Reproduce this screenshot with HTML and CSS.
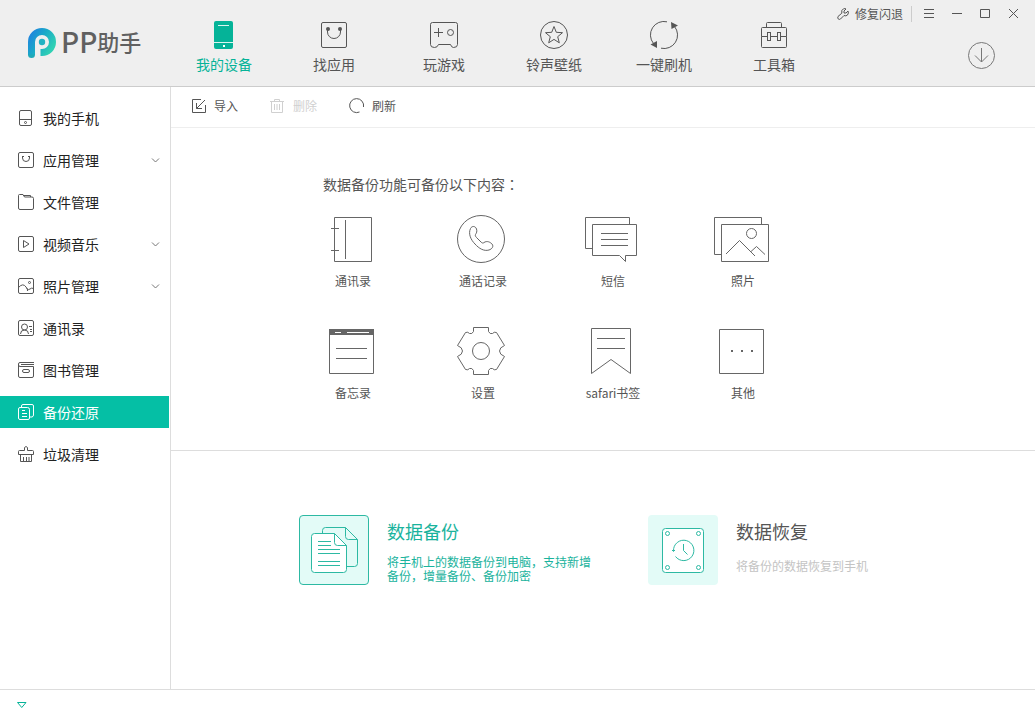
FILE: index.html
```html
<!DOCTYPE html>
<html lang="zh-CN">
<head>
<meta charset="utf-8">
<title>PP助手</title>
<link rel="stylesheet" href="styles.css">
</head>
<body>
<header class="header">
  <h1 class="logo">
    <svg width="28" height="31" viewBox="0 0 28 31" aria-hidden="true">
      <defs><linearGradient id="logo-fill" gradientUnits="userSpaceOnUse" x1="3" y1="5" x2="25" y2="19"><stop offset="0" stop-color="#1f86dd"/><stop offset=".45" stop-color="#1aa9c8"/><stop offset="1" stop-color="#2fd0b4"/></linearGradient></defs>
      <path d="M3.5 27V14A10.5 10.5 0 1 1 14 24.5H12.500" fill="none" stroke="url(#logo-fill)" stroke-width="7"/>
      <path d="M0 26.500h7a3.500 3.500 0 0 1-7 0z" fill="#1fa9b8"/>
      <circle cx="14" cy="14" r="3.200" fill="#22b2c3"/>
    </svg>
    <span class="logo-latin">PP</span><span class="logo-cjk">助手</span>
  </h1>
  <nav class="nav">
    <a class="nav-item active" href="#">
      <svg class="icon" width="28" height="28" viewBox="0 0 28 28"><rect x="4" y="0" width="19" height="28" rx="2" fill="#05b398" stroke="none"/><path d="M8 4.500h11M4 21.500h19" stroke="#d8f5ef"/><rect x="13" y="24" width="2" height="2" fill="#fff" stroke="none"/></svg>
      <span>我的设备</span>
    </a>
    <a class="nav-item" href="#">
      <svg class="icon" width="28" height="28" viewBox="0 0 28 28"><rect x="1.500" y="1.500" width="25" height="25" rx="1.500"/><path d="M7.500 8v3a6.500 6.500 0 0 0 13 0V8"/><circle cx="8" cy="8" r="2" fill="#555" stroke="none"/><circle cx="20" cy="8" r="2" fill="#555" stroke="none"/></svg>
      <span>找应用</span>
    </a>
    <a class="nav-item" href="#">
      <svg class="icon" width="28" height="28" viewBox="0 0 28 28"><path d="M2.500 1.500h23q2 0 2 2v20q0 3-4 3-2 0-3-3H8.500q-1 3-4 3-4 0-4-3v-20q0-2 2-2zM4 11.500h9M8.500 7v9"/><circle cx="20.500" cy="11.500" r="3"/></svg>
      <span>玩游戏</span>
    </a>
    <a class="nav-item" href="#">
      <svg class="icon" width="28" height="28" viewBox="0 0 28 28"><circle cx="14" cy="14" r="13.500"/><path d="M14 5.500l2.300 5.800 6.200.4-4.800 4 1.600 6.100-5.300-3.400-5.300 3.400 1.600-6.100-4.800-4 6.200-.4z"/></svg>
      <span>铃声壁纸</span>
    </a>
    <a class="nav-item" href="#">
      <svg class="icon" width="28" height="28" viewBox="0 0 28 28"><path d="M17 .8A13.500 13.500 0 0 0 3.500 22.500M11 27.200A13.500 13.500 0 0 0 24.500 5.500"/><path d="M21 1l7 3.500-6.500 3.500zM7 27L.5 23.500 7 20z" fill="#555" stroke="none"/></svg>
      <span>一键刷机</span>
    </a>
    <a class="nav-item" href="#">
      <svg class="icon" width="28" height="28" viewBox="0 0 28 28"><path d="M6.500 6.500v-4q0-1 1-1h13q1 0 1 1v4M1.500 15.500v-8q0-1 1-1h23q1 0 1 1v8M1.500 15.500v10q0 1 1 1h23q1 0 1-1v-10M1.500 15.500h6M10.500 15.500h7M20.500 15.500h6"/><rect x="7.500" y="11.500" width="3" height="8"/><rect x="17.500" y="11.500" width="3" height="8"/></svg>
      <span>工具箱</span>
    </a>
  </nav>
  <div class="window-area">
    <div class="window-bar">
      <button class="fix">
        <svg class="icon" width="12" height="12" viewBox="0 0 12 12"><path d="M1 8.500L4.800 5.200Q4 2 6.500.8 8 .2 9 1L7 3v2h2l2-2q1 2-.5 4Q9 8.500 7 7.500L3.500 11q-1 .8-2 .2-1.300-1.200-.5-2.700z"/></svg>
        修复闪退
      </button>
      <button class="window-button" aria-label="菜单"><svg class="icon" width="11" height="11" viewBox="0 0 11 11"><path d="M0 1.500h10M0 5.500h10M0 9.500h10"/></svg></button>
      <button class="window-button" aria-label="最小化"><svg class="icon" width="11" height="11" viewBox="0 0 11 11"><path d="M0 5.500h10"/></svg></button>
      <button class="window-button" aria-label="最大化"><svg class="icon" width="11" height="11" viewBox="0 0 11 11"><path d="M.5 1.500h9v8h-9z"/></svg></button>
      <button class="window-button" aria-label="关闭"><svg class="icon" width="11" height="11" viewBox="0 0 11 11"><path d="M1 1l9 9M10 1l-9 9"/></svg></button>
    </div>
    <button class="download" aria-label="下载"><svg class="icon" width="28" height="28" viewBox="0 0 28 28"><circle cx="13.500" cy="14.500" r="13"/><path d="M13.500 7v14M7 14.500l6.500 6.500 6.500-6.500"/></svg></button>
  </div>
</header>

<div class="workspace">
  <nav class="sidebar">
    <a class="side-item" href="#"><svg class="icon" width="16" height="16" viewBox="0 0 16 16"><rect x="1.500" y=".5" width="12" height="15" rx="1.500"/><path d="M1.500 9.500h12"/><circle cx="7.500" cy="12.500" r="1"/></svg><span>我的手机</span></a>
    <a class="side-item" href="#"><svg class="icon" width="16" height="16" viewBox="0 0 16 16"><rect x=".5" y=".5" width="15" height="15" rx="1.500"/><path d="M4.500 4.500v1.500a3.500 3.500 0 0 0 7 0V4.500M4 4.500h2M10 4.500h2"/></svg><span>应用管理</span><svg class="chevron" width="9" height="5" viewBox="0 0 9 5"><path d="M1 .5l3.500 3.500L8 .5"/></svg></a>
    <a class="side-item" href="#"><svg class="icon" width="16" height="16" viewBox="0 0 16 16"><path d="M.5 14V1.500q0-1 1-1h3.500l1.500 2.500h7.500q1.500 0 1.500 1.500V14q0 1.500-1.500 1.500H2Q.5 15.500.5 14zM5 1.500h7.500V3"/></svg><span>文件管理</span></a>
    <a class="side-item" href="#"><svg class="icon" width="16" height="16" viewBox="0 0 16 16"><rect x=".5" y=".5" width="15" height="15" rx="1.500"/><path d="M5.500 4.500v7L11 8z"/></svg><span>视频音乐</span><svg class="chevron" width="9" height="5" viewBox="0 0 9 5"><path d="M1 .5l3.500 3.500L8 .5"/></svg></a>
    <a class="side-item" href="#"><svg class="icon" width="16" height="16" viewBox="0 0 16 16"><rect x=".5" y=".5" width="15" height="15" rx="1.500"/><circle cx="11.500" cy="4.500" r="1"/><path d="M.5 9.500Q5 4.500 8 9q2 2 1.500 4M8.500 10.500q2 2 3.500.5t3.500-.5"/></svg><span>照片管理</span><svg class="chevron" width="9" height="5" viewBox="0 0 9 5"><path d="M1 .5l3.500 3.500L8 .5"/></svg></a>
    <a class="side-item" href="#"><svg class="icon" width="16" height="16" viewBox="0 0 16 16"><rect x=".5" y=".5" width="15" height="15" rx="1.500"/><circle cx="6.500" cy="7" r="3"/><path d="M2.500 14q0-4 4-4t4 4M11 6.500h3M12 9.500h2M12 11.500h2"/></svg><span>通讯录</span></a>
    <a class="side-item" href="#"><svg class="icon" width="16" height="16" viewBox="0 0 16 16"><path d="M16 .5H2Q.5.500.5 2v12q0 1.500 1.500 1.500h12q1.500 0 1.500-1.500V4.500H2Q.5 4.500.5 2.500M3 2.500h13"/><rect x="4.500" y="7.500" width="7" height="3" rx="1.500"/></svg><span>图书管理</span></a>
    <a class="side-item selected" href="#"><svg class="icon" width="16" height="16" viewBox="0 0 16 16"><path d="M2 3.500h7.500q2 0 2 2V14q0 1.500-1.500 1.500H2Q.5 15.500.5 14V5Q.5 3.500 2 3.500zM3.500 3.500V2Q3.500.500 5 .5h9Q15.500.500 15.500 2v9q0 1.500-1.500 2h-2.500M4 6.500h3M4 9.500h5M4 12.500h5"/></svg><span>备份还原</span></a>
    <a class="side-item" href="#"><svg class="icon" width="16" height="16" viewBox="0 0 16 16"><path d="M6.500 4.500v-3Q8-.5 9.500 1.500v3h5q1 0 1 1v3H.5v-3q0-1 1-1h5M2.500 8.500v7h11v-7M5.500 11v4M8.500 11v4M11 11v4"/></svg><span>垃圾清理</span></a>
  </nav>

  <main class="main">
    <div class="toolbar">
      <button class="tool"><svg class="icon" width="16" height="16" viewBox="0 0 16 16"><path d="M10 1.500H1.500v13h13V7M14 2L5.500 10.500M5.500 5v5.500H11"/></svg>导入</button>
      <button class="tool" disabled><svg class="icon" width="16" height="16" viewBox="0 0 16 16"><path d="M0 3.500h14M4.500 3.500v-2h5v2M1.500 3.500v11h11v-11M4.500 6v6M7 6v6M9.500 6v6"/></svg>删除</button>
      <button class="tool"><svg class="icon" width="16" height="16" viewBox="0 0 16 16"><path d="M10.500 14A7 7 0 1 1 14.500 9"/></svg>刷新</button>
    </div>

    <section class="contents">
      <h2 class="contents-title" lang="zh-TW">数据备份功能可备份以下内容：</h2>
      <ul class="kinds">
        <li class="kind"><svg class="icon" width="56" height="48" viewBox="0 0 56 48"><path d="M9.500 2.500h37v44h-37zM20.500 5v39M6 13.500h8M6 35.500h8"/></svg><span>通讯录</span></li>
        <li class="kind"><svg class="icon" width="56" height="48" viewBox="0 0 56 48"><circle cx="26" cy="24" r="23.500"/><path d="M15.500 13.500c1.500-3 5-2.500 6 .5.800 2.500 0 4-1 5.500-.5 1 0 2 1 3l4.500 4.500c1 1 2 1.500 3 .5 3-2 6-.5 8 1.500 2 2.500 0 5-3 6-5 1.500-10-1.500-14-6-4-4-7-10-4.500-15.500z"/></svg><span>通话记录</span></li>
        <li class="kind"><svg class="icon" width="56" height="48" viewBox="0 0 56 48"><path d="M7.500 33.500h-7v-31h44v7M7.500 9.500h44v31H40.500v6l-6-6h-27zM16 18.500h27M16 24.500h27M16 30.500h27"/></svg><span>短信</span></li>
        <li class="kind"><svg class="icon" width="56" height="48" viewBox="0 0 56 48"><path d="M6.500 39.500h-7v-37h47v7M6.500 9.500h47v37h-47zM11 39l13.500-13.500L40 41M36 36.500l5.500-5L50 39.500"/><circle cx="36.500" cy="18.500" r="5"/></svg><span>照片</span></li>
        <li class="kind"><svg class="icon" width="56" height="48" viewBox="0 0 56 48"><path d="M4.500 2.500h44v44h-44z"/><path d="M4 2h45v6H4z" fill="#666" stroke="none"/><path d="M10 5.500h6M22 5.500h22" stroke="#fff"/><path d="M11 21.500h31M11 31.500h31"/></svg><span>备忘录</span></li>
        <li class="kind"><svg class="icon" width="56" height="48" viewBox="0 0 56 48"><path d="M18.500.5h15v4q1.500 3 4 2 1.500-2 4-1l8 13q-5 2-5 5.500t5 5.500l-8 13q-2.500 1-4-1-2.500-1-4 2v4h-15v-4q-1.500-3-4-2-1.500 2-4 1l-8-13q5-2 5-5.500t-5-5.500l8-13q2.500-1 4 1 2.500 1 4-2z"/><circle cx="26" cy="24" r="8.500"/></svg><span>设置</span></li>
        <li class="kind"><svg class="icon" width="56" height="48" viewBox="0 0 56 48"><path d="M6.500 1.500h39v45L26 32.500 6.500 46.500zM12 11.500h28M12 21.500h28"/></svg><span>safari书签</span></li>
        <li class="kind"><svg class="icon" width="56" height="48" viewBox="0 0 56 48"><path d="M4.500 2.500h44v44h-44z"/><path d="M16 23h2v2h-2zM26 23h2v2h-2zM36 23h2v2h-2z" fill="#666" stroke="none"/></svg><span>其他</span></li>
      </ul>
    </section>

    <section class="actions">
      <button class="action primary">
        <svg class="action-icon" width="70" height="70" viewBox="0 0 70 70"><rect x=".5" y=".5" width="69" height="69" rx="3.500" fill="#e3fbf7"/><path d="M23.500 18.500v-3q0-3 3-3h20l12 12v24q0 3-3 3h-8" fill="#e3fbf7"/><path d="M46.500 12.500v9q0 3 3 3h9"/><path d="M15.500 18.500h20l12 12v24q0 3-3 3h-29q-3 0-3-3v-33q0-3 3-3z" fill="#fff"/><path d="M35.500 18.500v9q0 3 3 3h9M19 26.500h13M19 30.500h13M19 34.500h22M19 38.500h22M19 46.500h22M19 50.500h22"/></svg>
        <span class="action-text"><span class="action-title">数据备份</span><span class="action-note">将手机上的数据备份到电脑，支持新增备份，增量备份、备份加密</span></span>
      </button>
      <button class="action">
        <svg class="action-icon" width="70" height="70" viewBox="0 0 70 70"><rect width="70" height="70" rx="4" fill="#e3fbf7" stroke="none"/><rect x="14.500" y="13.500" width="41" height="44" rx="3" fill="#fff"/><circle cx="19.500" cy="18.500" r="2"/><circle cx="50.500" cy="18.500" r="2"/><circle cx="19.500" cy="52.500" r="2"/><circle cx="50.500" cy="52.500" r="2"/><path d="M25.500 36A10.200 10.200 0 1 1 27.500 41.500M35.500 29v6.500l4 4M24 35l1.500 1.500L27 35"/></svg>
        <span class="action-text short"><span class="action-title">数据恢复</span><span class="action-note">将备份的数据恢复到手机</span></span>
      </button>
    </section>
  </main>
</div>

<footer class="footer">
  <button class="expand" aria-label="展开"><svg width="10" height="7" viewBox="0 0 10 7"><path d="M.5 1.500h8.500L4.750 6.500z" fill="none" stroke="#05b398"/></svg></button>
</footer>
</body>
</html>
```

FILE: styles.css
```css
* {
  box-sizing: border-box;
}

body {
  display: flex;
  flex-direction: column;
  min-height: 100vh;
  margin: 0;
  background: #fff;
  color: #555;
  font: 12px/16px "Noto Sans CJK SC", "Noto Sans", sans-serif;
}

button {
  padding: 0;
  border: 0;
  background: none;
  color: inherit;
  font: inherit;
  text-align: left;
}

a {
  color: inherit;
  text-decoration: none;
}

svg {
  display: block;
  flex: none;
  overflow: visible;
}

.icon {
  fill: none;
  stroke: currentColor;
}

/* Header */
.header {
  display: flex;
  min-height: 87px;
  border-bottom: 1px solid #ccc;
  background: #efefef;
}

.logo {
  display: flex;
  flex: none;
  align-items: center;
  width: 169px;
  margin: 0;
  padding-left: 28px;
  color: #606060;
  font-weight: 500;
}

.logo-latin {
  margin-left: 5px;
  padding-bottom: 4px;
  font-size: 28px;
  line-height: 32px;
}

.logo-cjk {
  padding-bottom: 4px;
  font-size: 22px;
  line-height: 32px;
}

.nav {
  display: flex;
}

.nav-item {
  display: flex;
  flex-direction: column;
  align-items: center;
  gap: 5px;
  width: 110px;
  padding-top: 21px;
  font-size: 14px;
  line-height: 20px;
}

.nav-item.active {
  color: #05b398;
}

.window-area {
  display: flex;
  flex-direction: column;
  align-items: flex-end;
  gap: 14px;
  margin-left: auto;
  padding-right: 8px;
}

.window-bar {
  display: flex;
  align-items: center;
  height: 27px;
}

.fix {
  display: flex;
  align-items: center;
  gap: 6px;
  margin-right: 3px;
  padding-right: 8px;
  border-right: 1px solid #ccc;
}

.window-button {
  display: flex;
  align-items: center;
  justify-content: center;
  width: 28px;
  height: 24px;
}

.download {
  margin-right: 31px;
  color: #777;
}

/* Sidebar */
.workspace {
  display: flex;
  flex: 1;
}

.sidebar {
  display: flex;
  flex: none;
  flex-direction: column;
  gap: 10px;
  width: 171px;
  padding: 15px 1px 15px 0;
  border-right: 1px solid #ddd;
  color: #222;
  font-size: 14px;
}

.side-item {
  display: flex;
  align-items: center;
  gap: 9px;
  height: 32px;
  padding: 0 9px 0 18px;
}

.side-item .icon {
  color: #555;
}

.side-item.selected {
  background: #05bfa5;
  color: #fff;
}

.side-item.selected .icon {
  color: #fff;
}

.chevron {
  margin-left: auto;
  fill: none;
  stroke: #777;
}

/* Main column */
.main {
  display: flex;
  flex: 1;
  flex-direction: column;
}

.toolbar {
  display: flex;
  align-items: center;
  gap: 32px;
  height: 41px;
  padding: 0 20px 2px;
  border-bottom: 1px solid #eee;
}

.tool {
  display: flex;
  align-items: center;
  gap: 7px;
}

.tool:disabled {
  color: #d0d0d0;
}

.contents {
  padding: 46px 20px 47px 117px;
  border-bottom: 1px solid #ddd;
}

.contents-title {
  margin: 0;
  padding-left: 35px;
  font-family: "Noto Sans CJK TC", sans-serif;
  font-size: 14px;
  font-weight: 400;
  line-height: 20px;
}

.kinds {
  display: grid;
  grid-template-columns: repeat(4, 130px);
  row-gap: 38px;
  margin: 0;
  padding: 21px 0 2px;
  list-style: none;
}

.kind {
  display: flex;
  flex-direction: column;
  align-items: center;
  gap: 10px;
}

.kind .icon {
  color: #666;
}

.actions {
  display: grid;
  flex: 1;
  grid-template-columns: 298px 298px;
  align-items: start;
  gap: 51px;
  padding: 64px 20px 64px 128px;
}

.action {
  display: flex;
  gap: 18px;
}

.action-icon {
  fill: none;
  stroke: #2db9a3;
}

.action-text {
  display: flex;
  flex-direction: column;
  gap: 12px;
  padding-top: 4px;
}

.action-text.short {
  gap: 16px;
}

.action-title {
  font-size: 18px;
  line-height: 24px;
}

.action-note {
  color: #c4c4c4;
  line-height: 14px;
}

.primary .action-text {
  color: #1ab39d;
}

.primary .action-note {
  color: inherit;
}

/* Footer */
.footer {
  display: flex;
  align-items: center;
  height: 30px;
  padding-left: 17px;
  border-top: 1px solid #ddd;
}
```
